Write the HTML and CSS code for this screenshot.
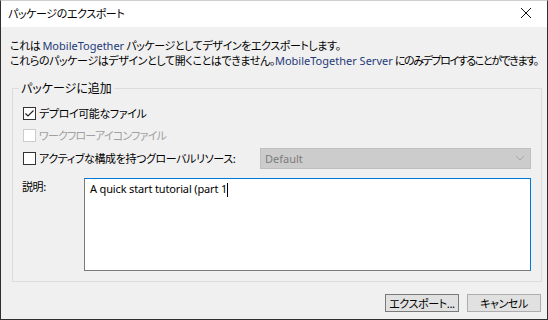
FILE: index.html
```html
<!DOCTYPE html>
<html lang="ja">
<head>
<meta charset="utf-8">
<link rel="stylesheet" href="styles.css">
</head>
<body>
<div class="window">
  <div class="titlebar">
    <span class="title">パッケージのエクスポート</span>
    <svg class="close" width="12" height="12" viewBox="0 0 12 12"><path d="M1 1L11 11M11 1L1 11" stroke="#111" stroke-width="1" fill="none"/></svg>
  </div>
  <div class="content">
    <p class="intro">これは <span class="brand">MobileTogether</span> パッケージとしてデザインをエクスポートします。<br>これらのパッケージはデザインとして開くことはできません。<span class="brand">MobileTogether Server</span> <span class="tight">にのみデプロイすることができます。</span></p>
    <fieldset class="group">
      <legend>パッケージに追加</legend>
      <div class="row r1">
        <span class="cb"><svg width="11" height="11" viewBox="0 0 11 11"><path d="M1.5 5.5L4 8L9.5 2.5" stroke="#222" stroke-width="1.2" fill="none"/></svg></span>
        <span class="lbl">デプロイ可能なファイル</span>
      </div>
      <div class="row r2 disabled">
        <span class="cb"></span>
        <span class="lbl">ワークフローアイコンファイル</span>
      </div>
      <div class="row r3">
        <span class="cb"></span>
        <span class="lbl">アクティブな構成を持つグローバルリソース:</span>
        <div class="combo"><span>Default</span><svg width="10" height="6" viewBox="0 0 10 6"><path d="M1 1L5 5L9 1" stroke="#a8a8a8" stroke-width="1" fill="none"/></svg></div>
      </div>
      <div class="row desc">
        <span class="desc-lbl">説明:</span>
        <div class="textbox"><span class="typed">A quick start tutorial (part 1</span><span class="caret"></span></div>
      </div>
    </fieldset>
    <div class="buttons">
      <button class="btn">エクスポート...</button>
      <button class="btn">キャンセル</button>
    </div>
  </div>
</div>
</body>
</html>
```
FILE: styles.css
```css
html, body {
  margin: 0;
  padding: 0;
  background: #ffffff;
}
.window {
  width: 548px;
  height: 320px;
  box-sizing: border-box;
  border: 1px solid #2f2f2f;
  border-top-color: #cfcfcf;
  background: #f0f0f0;
  font-family: "Noto Sans CJK JP", "Noto Sans", sans-serif;
  font-size: 11px;
  letter-spacing: -0.4px;
  color: #000;
  display: flex;
  flex-direction: column;
  font-feature-settings: "palt";
}
.titlebar {
  height: 26px;
  background: #ffffff;
  display: flex;
  align-items: center;
  justify-content: space-between;
  padding: 0 15px 0 7px;
  flex: none;
}
.title {
  font-size: 11px;
  line-height: 16px;
  margin-top: -2px;
}
.close {
  margin-top: -2px;
}
.content {
  flex: 1;
  padding: 0 5px 0 11px;
  display: flex;
  flex-direction: column;
}
.intro {
  margin: 11px 0 12px -2px;
  line-height: 14px;
  white-space: nowrap;
}
.brand {
  font-family: "Noto Sans", sans-serif;
  letter-spacing: 0;
  color: #1e3a78;
}
.tight {
  letter-spacing: -1.4px;
}
.group {
  margin: 0;
  padding: 0 0 0 10px;
  width: 530px;
  height: 202px;
  box-sizing: border-box;
  border: 1px solid #dcdcdc;
  min-width: 0;
}
.group legend {
  padding: 0 2px;
  margin-left: -4px;
  line-height: 16px;
  font-size: 12px;
  letter-spacing: 0;
}
.row {
  display: flex;
  align-items: center;
}
.r1 { margin-top: 6px; height: 22px; }
.r2 { height: 22px; }
.r3 { height: 24px; }
.cb {
  width: 13px;
  height: 13px;
  box-sizing: border-box;
  border: 1px solid #333;
  background: #fff;
  display: flex;
  align-items: center;
  justify-content: center;
  flex: none;
}
.lbl {
  margin-left: 3px;
  line-height: 16px;
  white-space: nowrap;
}
.disabled .cb {
  border-color: #cccccc;
}
.disabled .lbl {
  color: #a0a0a0;
  letter-spacing: -0.8px;
}
.combo {
  margin-left: auto;
  margin-right: 10px;
  width: 271px;
  height: 21px;
  box-sizing: border-box;
  background: #cccccc;
  border: 1px solid #bfbfbf;
  display: flex;
  align-items: center;
  justify-content: space-between;
  padding: 0 5px 0 4px;
  color: #7c7c7c;
  font-family: "Noto Sans", sans-serif;
  letter-spacing: 0;
}
.desc {
  align-items: flex-start;
  margin-top: 8px;
}
.desc-lbl {
  margin-left: -1px;
  margin-top: 0;
  line-height: 16px;
  width: 62px;
  flex: none;
}
.textbox {
  width: 447px;
  height: 93px;
  box-sizing: border-box;
  background: #fff;
  border: 1px solid #7a7a7a;
  border-top-color: #0078d7;
  border-right-color: #0078d7;
  padding: 2px 5px;
  font-family: "Noto Sans", sans-serif;
  letter-spacing: -0.15px;
  line-height: 16px;
  display: flex;
  align-items: flex-start;
}
.typed {
  white-space: pre;
}
.caret {
  display: inline-block;
  width: 1px;
  height: 14px;
  margin-top: 2px;
  background: #000;
}
.buttons {
  display: flex;
  justify-content: flex-end;
  gap: 8px;
  margin-top: 12px;
  padding-right: 1px;
}
.btn {
  width: 74px;
  height: 18px;
  box-sizing: border-box;
  border: 1px solid #adadad;
  background: #e1e1e1;
  font-family: "Noto Sans CJK JP", sans-serif;
  font-size: 11px;
  letter-spacing: -0.4px;
  font-feature-settings: "palt";
  padding: 0;
  line-height: 16px;
  color: #000;
  white-space: nowrap;
}
.btn:first-child {
  border-color: #7a7a7a;
}
```
